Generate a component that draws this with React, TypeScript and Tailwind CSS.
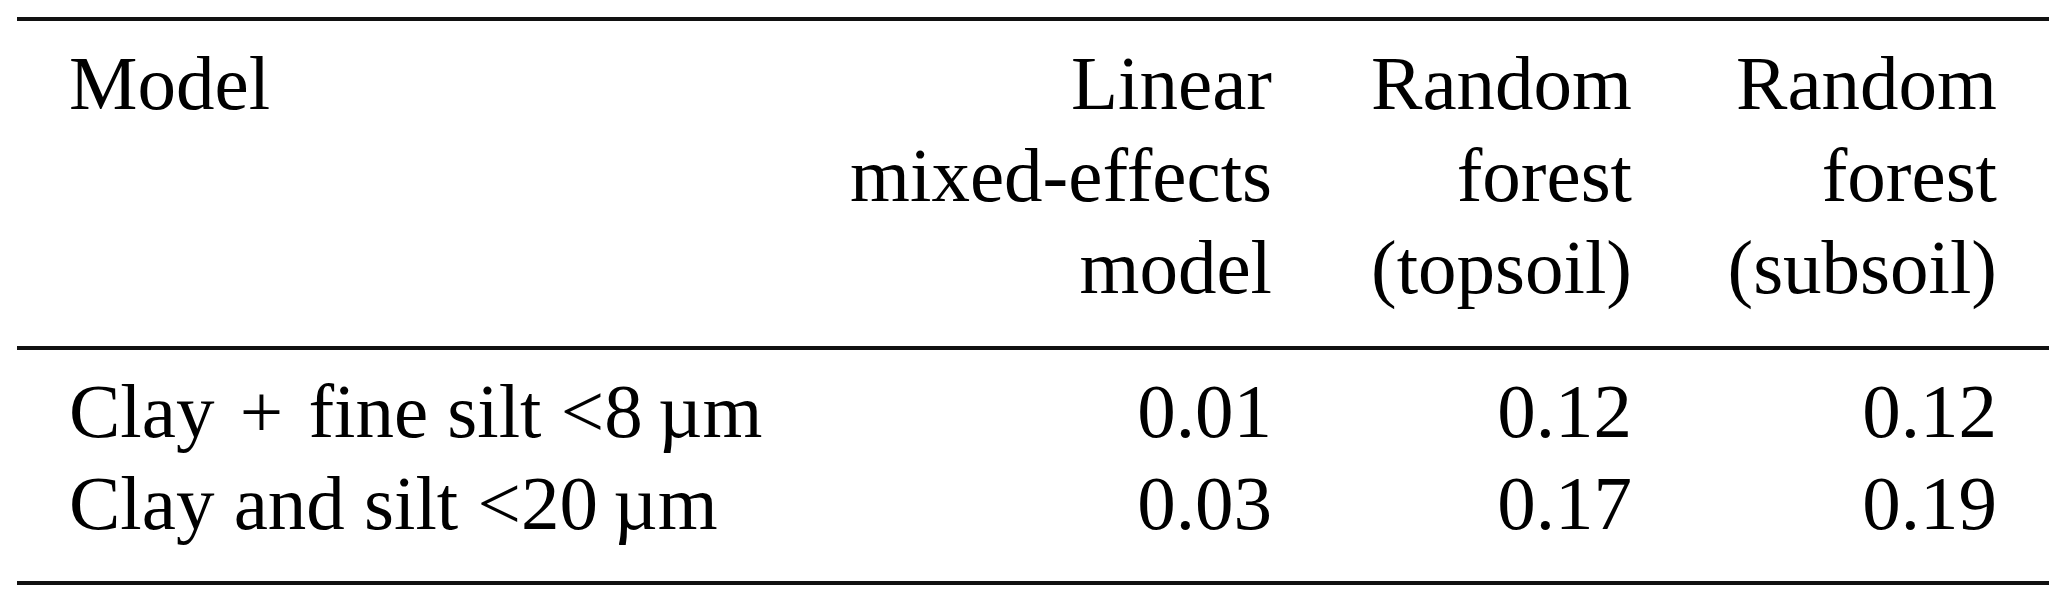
const header = [
  { lines: ["Linear", "mixed-effects", "model"] },
  { lines: ["Random", "forest", "(topsoil)"] },
  { lines: ["Random", "forest", "(subsoil)"] },
];

const rows = [
  {
    label: (
      <>
        Clay <span className="mx-[6px]">+</span> fine silt &lt;8{"\u2009"}µm
      </>
    ),
    key: "clay8",
    values: ["0.01", "0.12", "0.12"],
  },
  { label: <>Clay and silt &lt;20{"\u2009"}µm</>, key: "clay20", values: ["0.03", "0.17", "0.19"] },
];

const Rule = () => <div className="h-[4px] w-full bg-[#111]"></div>;

export default function App() {
  return (
    <div className="w-[2067px] h-[605px] bg-white overflow-hidden text-black font-['Liberation_Serif',serif] text-[77px] leading-[92px] whitespace-nowrap">
      <div className="ml-[17px] w-[2032px] pt-[17px]">
        <Rule />
        <div className="grid grid-cols-[803px_400px_360px_365px] px-[52px] pt-[16px] pb-[33px]">
          <div>Model</div>
          {header.map((col, i) => (
            <div className="flex flex-col items-end text-right" key={i}>
              {col.lines.map((line) => (
                <div key={line}>{line}</div>
              ))}
            </div>
          ))}
        </div>
        <Rule />
        <div className="grid grid-cols-[803px_400px_360px_365px] px-[52px] pt-[15px] pb-[32px]">
          {rows.map((row) => (
            <div className="contents" key={row.key}>
              <div>{row.label}</div>
              {row.values.map((v, j) => (
                <div className="text-right" key={row.key + j}>{v}</div>
              ))}
            </div>
          ))}
        </div>
        <Rule />
      </div>
    </div>
  );
}
